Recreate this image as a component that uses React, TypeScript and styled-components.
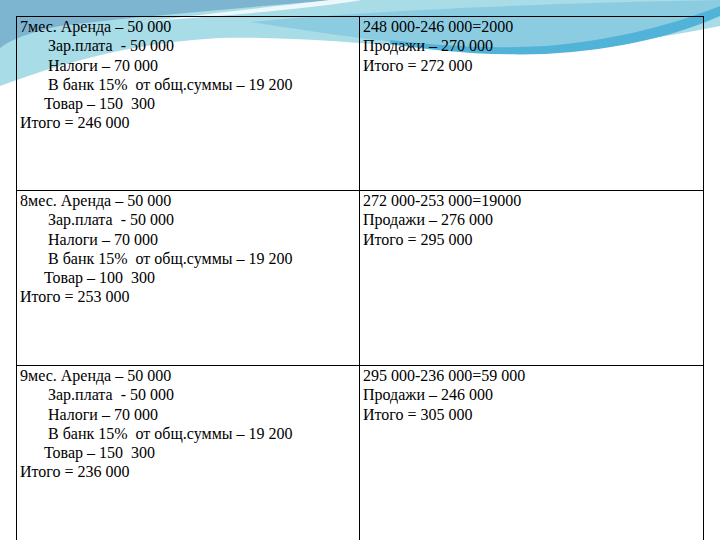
import React from 'react';
import styled, { createGlobalStyle } from 'styled-components';

const GlobalStyle = createGlobalStyle`
  html, body {
    margin: 0;
    padding: 0;
    width: 720px;
    height: 540px;
    overflow: hidden;
    background: #fff;
    font-family: "Liberation Serif", "Times New Roman", serif;
  }
`;

type Month = {
  label: string;
  goods: string;
  total: string;
  balance: string[];
};

const months: Month[] = [
  {
    label: '7мес.',
    goods: 'Товар – 150  300',
    total: 'Итого = 246 000',
    balance: ['248 000-246 000=2000', 'Продажи – 270 000', 'Итого = 272 000'],
  },
  {
    label: '8мес.',
    goods: 'Товар – 100  300',
    total: 'Итого = 253 000',
    balance: ['272 000-253 000=19000', 'Продажи – 276 000', 'Итого = 295 000'],
  },
  {
    label: '9мес.',
    goods: 'Товар – 150  300',
    total: 'Итого = 236 000',
    balance: ['295 000-236 000=59 000', 'Продажи – 246 000', 'Итого = 305 000'],
  },
];

function App() {
  return (
    <>
      <GlobalStyle />
      <Slide>
        <Backdrop viewBox="0 0 720 540" preserveAspectRatio="none">
          {/* pale cyan sweep under everything */}
          <path d="M0,0 H720 V26 C640,42 560,52 470,50 C380,46 300,36 220,38 C140,42 70,60 0,86 Z" fill="#a8dce7" />
          {/* mid blue band on the right, tapering off to the left */}
          <path d="M250,22 C400,8 600,2 720,0 V14 C650,36 560,50 480,48 C400,46 330,34 250,22 Z" fill="#8ccce1" />
          {/* darker stripe */}
          <path d="M390,40 C440,46 490,49 545,46 C620,40 680,22 720,6 V16 C680,34 620,50 545,54 C480,56 430,50 390,44 Z" fill="#52b3d9" />
          {/* blue top-left */}
          <path d="M0,0 H335 C240,8 120,18 60,26 C30,32 10,40 0,48 Z" fill="#7db5d1" />
          {/* white streak, fading out to the left */}
          <path d="M330,0 H362 C300,10 220,16 140,22 C220,12 280,6 330,0 Z" fill="#eef8fa" />
        </Backdrop>
        <Table>
          {months.map((m, i) => (
            <React.Fragment key={m.label}>
              <Cell $last={i === months.length - 1} $height={i === 0 ? 174 : 175}>
                <Line>{m.label} Аренда – 50 000</Line>
                <Line $indent={28}>Зар.плата  - 50 000</Line>
                <Line $indent={28}>Налоги – 70 000</Line>
                <Line $indent={28}>В банк 15%  от общ.суммы – 19 200</Line>
                <Line $indent={24}>{m.goods}</Line>
                <Line>{m.total}</Line>
              </Cell>
              <Cell $last={i === months.length - 1} $height={i === 0 ? 174 : 175}>
                {m.balance.map((b) => (
                  <Line key={b}>{b}</Line>
                ))}
              </Cell>
            </React.Fragment>
          ))}
        </Table>
      </Slide>
    </>
  );
}

export default App;

const Slide = styled.div`
  position: relative;
  width: 720px;
  height: 540px;
  overflow: hidden;
  padding: 16px 0 0 16px;
  box-sizing: border-box;
`;

const Backdrop = styled.svg`
  position: absolute;
  inset: 0;
  width: 720px;
  height: 540px;
  z-index: 0;
`;

const Table = styled.div`
  position: relative;
  z-index: 1;
  display: grid;
  grid-template-columns: 343px 344px;
  border-top: 1px solid #000;
  border-left: 1px solid #000;
  width: 688px;
  box-sizing: border-box;
`;

const Cell = styled.div<{ $last?: boolean; $height: number }>`
  box-sizing: border-box;
  height: ${(p) => (p.$last ? 200 : p.$height)}px;
  border-right: 1px solid #000;
  border-bottom: 1px solid #000;
  padding: 0 0 0 3px;
  font-family: "Liberation Serif", "Times New Roman", serif;
  font-size: 16px;
  line-height: 19.3px;
  color: #000;
`;

const Line = styled.div<{ $indent?: number }>`
  white-space: pre;
  padding-left: ${(p) => p.$indent ?? 0}px;
`;
